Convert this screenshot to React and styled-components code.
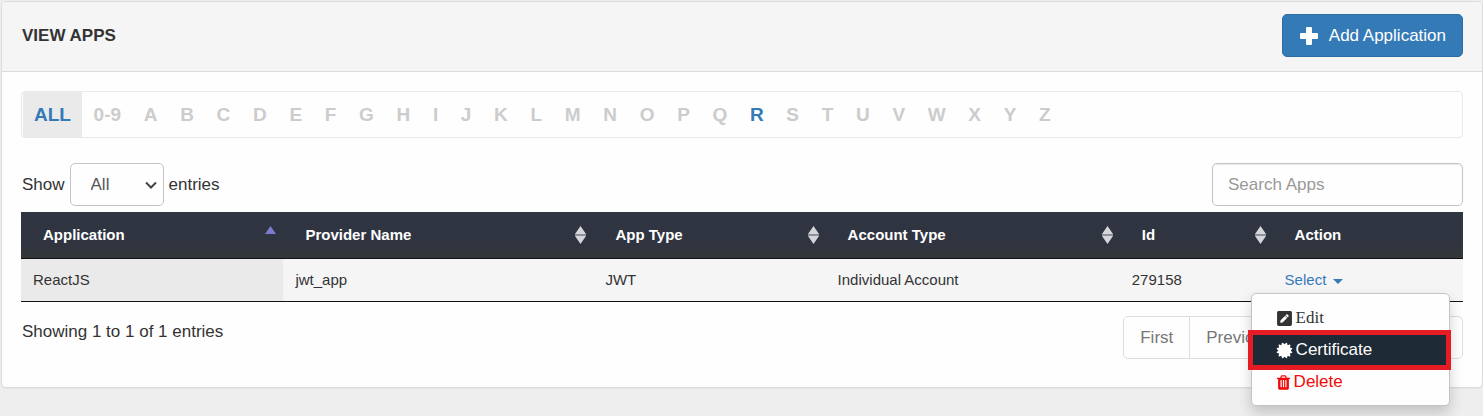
import { useState } from "react"
import styled, { createGlobalStyle } from "styled-components";
import { FaPenSquare } from "react-icons/fa";

const GlobalStyle = createGlobalStyle`
  * {
    box-sizing: border-box;
  }

  body {
    margin: 0;
    background-color: #efeeef;
    color: #333;
    font-family: "Liberation Sans", Arial, sans-serif;
    font-size: 17px;
    line-height: 24px;
  }
`;

const Panel = styled.section`
  margin: 1px 0 28px 1px;
  background-color: #fefefe;
  border: 1px solid #dcdcdd;
  border-radius: 5px;
  box-shadow: 0 1px 1px rgba(0, 0, 0, 0.05);
`;

const PanelHeader = styled.header`
  display: flex;
  align-items: center;
  justify-content: space-between;
  padding: 12px 19px 14px 20px;
  background-color: #f5f5f6;
  border-bottom: 1px solid #dcdcdd;
  border-radius: 4px 4px 0 0;
`;

const Title = styled.h1`
  margin: 0;
  font-size: 17px;
  font-weight: bold;
`;

const AddButton = styled.button`
  display: flex;
  align-items: center;
  gap: 10px;
  height: 43px;
  padding: 0 16px;
  color: #fff;
  background-color: #337ab7;
  border: 1px solid #2e6da4;
  border-radius: 5px;
  font: inherit;
  cursor: pointer;
`;

const PanelBody = styled.div`
  padding: 19px 19px 28px;
`;

const LetterBar = styled.nav`
  padding: 0 1px;
  border: 1px solid #e9e9ea;
  border-radius: 4px;
`;

const LetterList = styled.ul`
  display: flex;
  justify-content: space-between;
  max-width: 1039px;
  margin: 0;
  padding: 0;
  list-style: none;
`;

const LetterLink = styled.a`
  display: block;
  padding: 0 11px;
  font-size: 19px;
  font-weight: bold;
  line-height: 45px;
  text-decoration: none;
  color: ${(props) => (props.$enabled ? "#337ab7" : "#ccc")};
  background-color: ${(props) => (props.$active ? "#eaeaeb" : "transparent")};
`;

const Controls = styled.div`
  display: flex;
  align-items: center;
  justify-content: space-between;
  margin: 25px 0 6px;
  padding-left: 1px;
`;

const LengthLabel = styled.label`
  display: flex;
  align-items: center;
  gap: 5px;
`;

const SelectBox = styled.span`
  display: grid;
  grid-template-columns: 1fr 22px;
  align-items: center;
  width: 94px;
`;

const LengthSelect = styled.select`
  grid-area: 1 / 1 / 2 / 3;
  height: 43px;
  padding: 0 20px;
  color: #555;
  background-color: #fefefe;
  border: 1px solid #c4c4c8;
  border-radius: 5px;
  font: inherit;
  appearance: none;
`;

const Chevron = styled.svg`
  grid-area: 1 / 2 / 2 / 3;
  pointer-events: none;
`;

const SearchInput = styled.input`
  width: 251px;
  height: 43px;
  padding: 0 15px;
  color: #555;
  background-color: #fefefe;
  border: 1px solid #c4c4c8;
  border-radius: 5px;
  box-shadow: inset 0 1px 1px rgba(0, 0, 0, 0.08);
  font: inherit;

  &::placeholder {
    color: #999;
    opacity: 1;
  }
`;

const Table = styled.table`
  width: 100%;
  table-layout: fixed;
  border-collapse: separate;
  border-spacing: 0;
  font-size: 15px;
`;

const Col = styled.col`
  width: ${(props) => props.$width};
`;

const Th = styled.th`
  height: 47px;
  padding: 0 7px 0 22px;
  color: #fff;
  background-image: linear-gradient(#2f3541, #2f3440 70%, #333639);
  border-bottom: 1px solid #111;
  text-align: left;
`;

const ThContent = styled.div`
  display: flex;
  align-items: center;
  justify-content: space-between;
`;

const Td = styled.td`
  height: 43px;
  padding: 0 12px;
  background-color: ${(props) => (props.$sorted ? "#eaeaea" : "#f5f5f6")};
  border-bottom: 1px solid #111;
`;

const Dropdown = styled.div`
  position: relative;
`;

const SelectButton = styled.button`
  display: flex;
  align-items: center;
  gap: 7px;
  padding: 0;
  color: #337ab7;
  background: none;
  border: 0;
  font: inherit;
  cursor: pointer;
`;

const Caret = styled.span`
  margin-top: 2px;
  border-top: 5px solid;
  border-left: 5px solid transparent;
  border-right: 5px solid transparent;
`;

const Menu = styled.ul`
  position: absolute;
  top: 100%;
  left: -34px;
  z-index: 1;
  width: 199px;
  margin: 1px 0 0;
  padding: 8px 0 7px;
  list-style: none;
  background-color: #fefefe;
  border: 1px solid #c4c4c6;
  border-radius: 5px;
  box-shadow: 0 7px 14px rgba(0, 0, 0, 0.18);
  font-size: 17px;
`;

const MenuLink = styled.a`
  display: flex;
  align-items: center;
  gap: 3px;
  height: 32px;
  padding: 0 24px;
  color: ${(props) => props.$color || "#333"};
  font-family: ${(props) => (props.$serif ? '"Liberation Serif", "Times New Roman", serif' : "inherit")};
  text-decoration: none;
`;

const HighlightedLink = styled(MenuLink)`
  height: 40px;
  margin: -4px -2px -4px -4px;
  padding: 0 23px;
  color: #fff;
  background-color: #1e2a35;
  border: 5px solid #e51c24;
`;

const Footer = styled.div`
  display: flex;
  justify-content: space-between;
  margin-top: 14px;
  padding-left: 1px;
`;

const Info = styled.div`
  padding-top: 4px;
`;

const Pagination = styled.ul`
  display: flex;
  margin: 0;
  padding: 0;
  list-style: none;
  border: 1px solid #ddd;
  border-radius: 5px;
`;

const PageItem = styled.li`
  & + & {
    border-left: 1px solid #ddd;
  }
`;

const PageLink = styled.a`
  display: block;
  padding: 0 ${(props) => (props.$active ? "15px" : "16px")};
  line-height: 41px;
  text-decoration: none;
  color: ${(props) => (props.$active ? "#fff" : "#777")};
  background-color: ${(props) => (props.$active ? "#337ab7" : "transparent")};
`;

function PlusIcon() {
  return (
    <svg width="20" height="20" viewBox="0 0 20 20" fill="currentColor" aria-hidden="true">
      <path d="M8 1h4q1 0 1 1v5h5q1 0 1 1v4q0 1-1 1h-5v5q0 1-1 1h-4q-1 0-1-1v-5h-5q-1 0-1-1v-4q0-1 1-1h5v-5q0-1 1-1z" />
    </svg>
  );
}

function SortIcon({ ascending }) {
  return (
    <svg width="11" height="20" viewBox="0 0 11 20" aria-hidden="true">
      <path d="M5.500 1L11 9H0z" fill={ascending ? "#7b7bcf" : "#d5d6da"} />
      {!ascending && <path d="M0 11h11L5.500 19z" fill="#d5d6da" />}
      {!ascending && <path d="M0 10h11" stroke="#8d9098" strokeWidth="2" />}
    </svg>
  );
}

function CertificateIcon() {
  return (
    <svg width="17" height="17" viewBox="64 64 1664 1664" fill="currentColor" aria-hidden="true">
      <path d="M1504 896l138 135q30 28 20 70-12 41-52 51l-188 48 53 186q12 41-19 70-29 31-70 19l-186-53-48 188q-10 40-51 52-12 2-19 2-31 0-51-22l-135-138-135 138q-28 30-70 20-41-11-51-52l-48-188-186 53q-41 12-70-19-31-29-19-70l53-186-188-48q-40-10-52-51-10-42 20-70l138-135-138-135q-30-28-20-70 12-41 52-51l188-48-53-186q-12-41 19-70 29-31 70-19l186 53 48-188q10-41 51-51 41-12 70 19l135 139 135-139q29-30 70-19 41 10 51 51l48 188 186-53q41-12 70 19 31 29 19 70l-53 186 188 48q40 10 52 51 10 42-20 70z" />
    </svg>
  );
}

function TrashIcon() {
  return (
    <svg width="15" height="15" viewBox="160 96 1472 1600" fill="currentColor" aria-hidden="true">
      <path d="M704 1376v-704q0-14-9-23t-23-9h-64q-14 0-23 9t-9 23v704q0 14 9 23t23 9h64q14 0 23-9t9-23zm256 0v-704q0-14-9-23t-23-9h-64q-14 0-23 9t-9 23v704q0 14 9 23t23 9h64q14 0 23-9t9-23zm256 0v-704q0-14-9-23t-23-9h-64q-14 0-23 9t-9 23v704q0 14 9 23t23 9h64q14 0 23-9t9-23zm-544-992h448l-48-117q-7-9-17-11h-317q-10 2-17 11zm928 32v64q0 14-9 23t-23 9h-96v948q0 83-47 143.500t-113 60.500h-832q-66 0-113-58.500t-47-141.500v-952h-96q-14 0-23-9t-9-23v-64q0-14 9-23t23-9h309l70-167q15-37 54-63t79-26h320q40 0 79 26t54 63l70 167h309q14 0 23 9t9 23z" />
    </svg>
  );
}

const letters = ["ALL", "0-9", ..."ABCDEFGHIJKLMNOPQRSTUVWXYZ"];
const pages = ["First", "Previous", "1", "Next", "Last"];

const columns = [
  { label: "Application", width: "18.2%", sort: "asc" },
  { label: "Provider Name", width: "21.5%", sort: "both" },
  { label: "App Type", width: "16.1%", sort: "both" },
  { label: "Account Type", width: "20.4%", sort: "both" },
  { label: "Id", width: "10.6%", sort: "both" },
  { label: "Action", width: "auto" },
];

function ActionMenu() {
  const [open, setOpen] = useState(true);

  return (
    <Dropdown>
      <SelectButton type="button" aria-expanded={open} onClick={() => setOpen(!open)}>
        Select
        <Caret />
      </SelectButton>
      {open && (
        <Menu>
          <li>
            <MenuLink href="#edit" $serif>
              <FaPenSquare size={17} />
              Edit
            </MenuLink>
          </li>
          <li>
            <HighlightedLink href="#certificate">
              <CertificateIcon />
              Certificate
            </HighlightedLink>
          </li>
          <li>
            <MenuLink href="#delete" $color="#f00a0a">
              <TrashIcon />
              Delete
            </MenuLink>
          </li>
        </Menu>
      )}
    </Dropdown>
  );
}

function App() {
  const [apps] = useState([
    { id: 279158, name: "ReactJS", provider: "jwt_app", type: "JWT", account: "Individual Account" },
  ]);
  const [search, setSearch] = useState("");

  return (
    <>
      <GlobalStyle />
      <Panel>
        <PanelHeader>
          <Title>VIEW APPS</Title>
          <AddButton type="button">
            <PlusIcon />
            Add Application
          </AddButton>
        </PanelHeader>
        <PanelBody>
          <LetterBar>
            <LetterList>
              {letters.map((letter) => (
                <li key={letter}>
                  <LetterLink
                    href={`#${letter}`}
                    $active={letter === "ALL"}
                    $enabled={letter === "ALL" || letter === "R"}
                  >
                    {letter}
                  </LetterLink>
                </li>
              ))}
            </LetterList>
          </LetterBar>
          <Controls>
            <LengthLabel>
              Show
              <SelectBox>
                <LengthSelect defaultValue="all">
                  <option value="10">10</option>
                  <option value="25">25</option>
                  <option value="all">All</option>
                </LengthSelect>
                <Chevron width="16" height="16" viewBox="0 0 16 16" aria-hidden="true">
                  <path d="M4 5.500l5 5 5-5" fill="none" stroke="#444" strokeWidth="2" />
                </Chevron>
              </SelectBox>
              entries
            </LengthLabel>
            <SearchInput
              type="search"
              aria-label="Search Apps"
              placeholder="Search Apps"
              value={search}
              onChange={(e) => setSearch(e.target.value)}
            />
          </Controls>
          <Table>
            <colgroup>
              {columns.map((column) => (
                <Col key={column.label} $width={column.width} />
              ))}
            </colgroup>
            <thead>
              <tr>
                {columns.map((column) => (
                  <Th key={column.label}>
                    <ThContent>
                      {column.label}
                      {column.sort && <SortIcon ascending={column.sort === "asc"} />}
                    </ThContent>
                  </Th>
                ))}
              </tr>
            </thead>
            <tbody>
              {apps.map((app) => (
                <tr key={app.id}>
                  <Td $sorted>{app.name}</Td>
                  <Td>{app.provider}</Td>
                  <Td>{app.type}</Td>
                  <Td>{app.account}</Td>
                  <Td>{app.id}</Td>
                  <Td>
                    <ActionMenu />
                  </Td>
                </tr>
              ))}
            </tbody>
          </Table>
          <Footer>
            <Info>Showing 1 to 1 of 1 entries</Info>
            <Pagination>
              {pages.map((page) => (
                <PageItem key={page}>
                  <PageLink href={`#${page}`} $active={page === "1"}>
                    {page}
                  </PageLink>
                </PageItem>
              ))}
            </Pagination>
          </Footer>
        </PanelBody>
      </Panel>
    </>
  );
}

export default App;
